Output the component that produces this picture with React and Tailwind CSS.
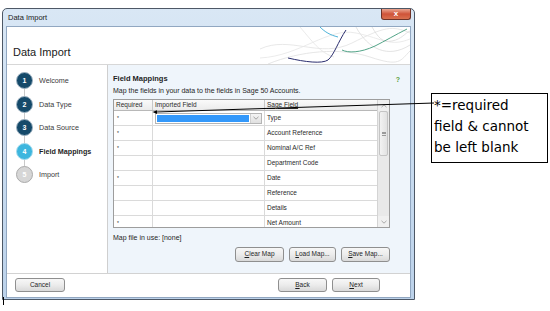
import React from "react";

const rows = [
  ["*", "Type"],
  ["*", "Account Reference"],
  ["*", "Nominal A/C Ref"],
  ["", "Department Code"],
  ["*", "Date"],
  ["", "Reference"],
  ["", "Details"],
  ["*", "Net Amount"],
];

const steps = [
  { n: "1", label: "Welcome", state: "done" },
  { n: "2", label: "Data Type", state: "done" },
  { n: "3", label: "Data Source", state: "done" },
  { n: "4", label: "Field Mappings", state: "current" },
  { n: "5", label: "Import", state: "todo" },
];

function Btn({ children, className }) {
  return (
    <div
      className={
        "flex items-center justify-center rounded-[3px] border border-[#8f8f8f] bg-linear-to-b from-[#f7f7f7] via-[#ececec] to-[#d9d9d9] text-[6.5px] leading-none text-[#1e1e1e] " +
        className
      }
    >
      {children}
    </div>
  );
}

function StepCircle({ n, state }) {
  let cls = "bg-[#154a6a] text-white border-[#9fb3c2]";
  if (state === "current") cls = "bg-[#3db6de] text-white border-[#a6dcee]";
  if (state === "todo") cls = "bg-[#d6d6d6] text-white border-[#ababab]";
  return (
    <div
      className={
        "relative z-10 flex h-[17px] w-[17px] shrink-0 items-center justify-center rounded-full border-[1.5px] text-[7px] font-bold leading-none " +
        cls
      }
    >
      {n}
    </div>
  );
}

export default function App() {
  return (
    <div className="relative h-[311px] w-[550px] overflow-hidden bg-white font-['Liberation_Sans',Arial,sans-serif] text-[#1e1e1e]">
      {/* Window */}
      <div className="ml-[2px] mt-[8px] flex h-[292px] w-[413px] flex-col rounded-t-[5px] border border-[#4d5866] bg-linear-to-b from-[#d9e7f5] via-[#c9dcf0] to-[#bcd2ea] px-[3px] pb-[1px]">
        {/* Title bar */}
        <div className="flex h-[17px] items-start justify-between">
          <div className="self-center pl-[2px] text-[7.5px] leading-none text-[#1a1a1a]">Data Import</div>
          <div className="flex h-[11px] w-[30px] items-center justify-center rounded-b-[3px] border border-t-0 border-[#6e3226] bg-linear-to-b from-[#e9a692] via-[#cf5338] to-[#d9704f] text-[8px] font-bold leading-none text-white">
            x
          </div>
        </div>

        {/* Client area */}
        <div className="flex flex-1 flex-col border border-[#91a7c1] bg-white">
          {/* Header */}
          <div className="relative h-[38px] shrink-0 overflow-hidden border-b border-[#d7d7d7] bg-white">
            <svg className="absolute right-0 top-0" width="150" height="37" viewBox="0 0 150 37" fill="none">
              <path d="M0 22 C 30 8, 60 32, 92 16 S 132 -2, 150 6" stroke="#e2e2e2" strokeWidth="0.8" />
              <path d="M8 37 C 40 24, 80 20, 110 30 S 140 34, 150 24" stroke="#e0e0e0" strokeWidth="0.8" />
              <path d="M96 0 C 108 22, 128 32, 150 18" stroke="#dcdcdc" strokeWidth="0.8" />
              <path d="M0 31 C 40 29, 68 0, 96 6 S 130 20, 150 12" stroke="#e6e6e6" strokeWidth="0.8" />
              <path d="M40 0 C 52 14, 60 26, 74 30" stroke="#e4e4e4" strokeWidth="0.8" />
              <path d="M112 0 C 118 10, 122 16, 132 14 S 145 6, 150 4" stroke="#dadada" strokeWidth="0.8" />
              <path d="M60 0 C 65 5, 70 8, 78 10" stroke="#38a9d4" strokeWidth="0.9" />
              <path d="M28 31 C 45 35, 62 37, 68 33 C 74 28, 78 15, 86 3" stroke="#2a2d6e" strokeWidth="1" />
              <path d="M82 23 C 88 26, 100 26, 115 19 C 125 14, 135 8, 147 2" stroke="#3f9a7a" strokeWidth="0.9" />
            </svg>
            <div className="relative pl-[6px] pt-[19px] text-[11px] leading-[13px] text-[#1a1a1a]">Data Import</div>
          </div>

          {/* Body */}
          <div className="flex flex-1">
            {/* Sidebar */}
            <div className="relative w-[101px] shrink-0 border-r border-[#cfcfcf] bg-white pt-[4px]">
              <div className="absolute left-[16.5px] top-[16px] h-[94px] w-[1.5px] bg-[#c9c9c9]" />
              {steps.map((s) => (
                <div key={s.n} className="flex h-[23.5px] items-center gap-[6px] pl-[9px]">
                  <StepCircle n={s.n} state={s.state} />
                  <span
                    className={
                      "text-[7.2px] leading-none " +
                      (s.state === "current" ? "font-bold text-[#1e1e1e]" : "text-[#3a3a3a]")
                    }
                  >
                    {s.label}
                  </span>
                </div>
              ))}
            </div>

            {/* Main panel */}
            <div className="flex flex-1 flex-col bg-[#eff5fb] pl-[5px] pr-[10px] pt-[9px]">
              <div className="flex h-[10px] items-center justify-between">
                <span className="text-[7.5px] font-bold leading-none text-[#1e1e1e]">Field Mappings</span>
                <span className="text-[7px] font-bold leading-none text-[#5a9e3e]">?</span>
              </div>
              <div className="mt-[2px] h-[10px] text-[7px] leading-[10px] text-[#1e1e1e]">
                Map the fields in your data to the fields in Sage 50 Accounts.
              </div>

              {/* Table */}
              <div className="mr-[10px] mt-[3px] flex h-[129px] overflow-hidden border border-[#9d9d9d] bg-white">
                <div className="flex flex-1 flex-col">
                  <div className="flex h-[11px] shrink-0 border-b border-[#b8b8b8] bg-linear-to-b from-[#fafafa] to-[#ebebeb] text-[6.5px] leading-none text-[#2a2a2a]">
                    <div className="flex w-[39px] items-center border-r border-[#c8c8c8] pl-[2px]">Required</div>
                    <div className="flex w-[112px] items-center border-r border-[#c8c8c8] pl-[2px]">Imported Field</div>
                    <div className="flex flex-1 items-center pl-[2px] underline">Sage Field</div>
                  </div>
                  {rows.map((r, i) => (
                    <div key={i} className="flex h-[15px] shrink-0 border-b border-[#dadada] text-[6.5px] leading-none text-[#2a2a2a]">
                      <div className="flex w-[39px] items-center border-r border-[#dadada] pl-[3px] text-[5px]">{r[0]}</div>
                      <div className="flex w-[112px] items-center border-r border-[#dadada] pl-[2px]">
                        {i === 0 && (
                          <div className="flex h-[11px] w-[107px] border border-[#b5b5b5] bg-white">
                            <div className="m-[1px] flex-1 bg-[#3398fa]" />
                            <div className="flex w-[11px] items-center justify-center border-l border-[#cfcfcf] bg-linear-to-b from-[#f4f4f4] to-[#e0e0e0]">
                              <svg width="6" height="4" viewBox="0 0 6 4">
                                <path d="M0.5 0.8 L3 3.2 L5.5 0.8" stroke="#9a9a9a" strokeWidth="0.9" fill="none" />
                              </svg>
                            </div>
                          </div>
                        )}
                      </div>
                      <div className="flex flex-1 items-center pl-[2px]">{r[1]}</div>
                    </div>
                  ))}
                </div>
                {/* Scrollbar */}
                <div className="flex w-[12px] shrink-0 flex-col border-l border-[#d4d4d4] bg-[#e9e9e9]">
                  <div className="flex h-[11px] shrink-0 items-center justify-center bg-[#f0f0f0]">
                    <svg width="6" height="4" viewBox="0 0 6 4">
                      <path d="M0.5 3.2 L3 0.8 L5.5 3.2" stroke="#a0a0a0" strokeWidth="0.9" fill="none" />
                    </svg>
                  </div>
                  <div className="mx-[1px] flex h-[45px] shrink-0 items-center justify-center rounded-[2px] border border-[#c4c4c4] bg-linear-to-r from-[#f3f3f3] to-[#e2e2e2]">
                    <div className="flex flex-col gap-[1px]">
                      <div className="h-[0.6px] w-[4px] bg-[#9a9a9a]" />
                      <div className="h-[0.6px] w-[4px] bg-[#9a9a9a]" />
                      <div className="h-[0.6px] w-[4px] bg-[#9a9a9a]" />
                    </div>
                  </div>
                  <div className="flex-1" />
                  <div className="flex h-[11px] shrink-0 items-center justify-center bg-[#f0f0f0]">
                    <svg width="6" height="4" viewBox="0 0 6 4">
                      <path d="M0.5 0.8 L3 3.2 L5.5 0.8" stroke="#a0a0a0" strokeWidth="0.9" fill="none" />
                    </svg>
                  </div>
                </div>
              </div>

              <div className="mt-[5px] h-[10px] text-[7px] leading-[10px] text-[#1e1e1e]">Map file in use: [none]</div>

              <div className="mr-[10px] mt-[4px] flex justify-end gap-[5px]">
                <Btn className="h-[15px] w-[49px]">
                  <span><u>C</u>lear Map</span>
                </Btn>
                <Btn className="h-[15px] w-[47px]">
                  <span><u>L</u>oad Map...</span>
                </Btn>
                <Btn className="h-[15px] w-[49px]">
                  <span><u>S</u>ave Map...</span>
                </Btn>
              </div>
            </div>
          </div>

          {/* Footer */}
          <div className="flex h-[24px] shrink-0 items-start border-t border-[#d2d2d2] bg-white pt-[4px]">
            <Btn className="ml-[8px] h-[14px] w-[50px]">Cancel</Btn>
            <div className="flex-1" />
            <Btn className="h-[14px] w-[49px]">
              <span><u>B</u>ack</span>
            </Btn>
            <Btn className="ml-[5px] mr-[30px] h-[14px] w-[48px]">
              <span><u>N</u>ext</span>
            </Btn>
          </div>
        </div>
      </div>

      {/* Annotation callout */}
      <div className="absolute left-[431px] top-[93px] h-[70px] w-[117px] border border-black bg-white pl-[2px] pt-[1px] font-['DejaVu_Sans',Verdana,sans-serif] text-[13.5px] leading-[21px] text-black">
        <div>*=required</div>
        <div>field &amp; cannot</div>
        <div>be left blank</div>
      </div>

      <svg className="pointer-events-none absolute left-0 top-0" width="550" height="311" viewBox="0 0 550 311">
        <line x1="156" y1="112" x2="434" y2="103" stroke="#000" strokeWidth="1" />
        <path d="M152.5 112.1 L157 110.2 L157 114 Z" fill="#000" />
        <line x1="3.5" y1="297" x2="3.5" y2="305" stroke="#000" strokeWidth="1" />
      </svg>
    </div>
  );
}
